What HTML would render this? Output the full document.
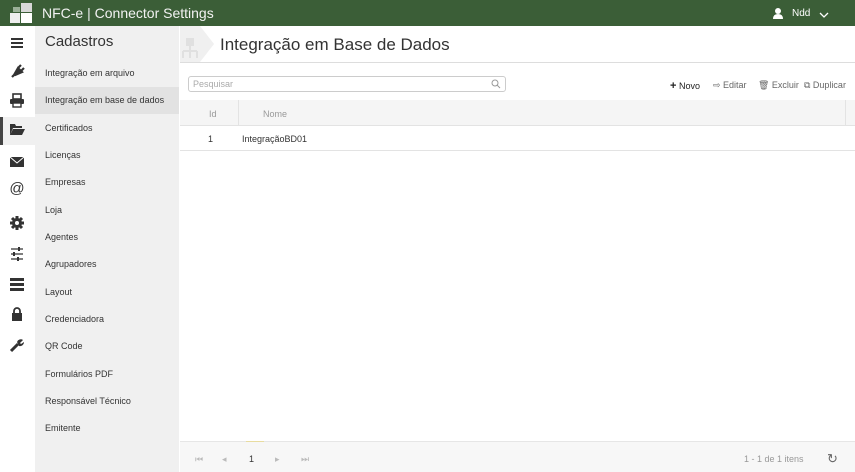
<!DOCTYPE html>
<html><head><meta charset="utf-8"><style>
*{margin:0;padding:0;box-sizing:border-box}
body{width:855px;height:472px;overflow:hidden;font-family:"Liberation Sans",sans-serif;background:#fff;position:relative;color:#333}
.hdr{position:absolute;left:0;top:0;width:855px;height:26px;background:#3b5e37;color:#fff}
.hdr .t{position:absolute;left:42px;top:5px;font-size:14px;color:#f2f2f2}
.hdr .u{position:absolute;left:792px;top:8px;font-size:10px}
.ib{position:absolute;left:0;top:26px;width:35px;height:446px;background:#fff}
.ic{position:absolute;left:9px;width:16px;height:16px}
.act{position:absolute;left:0;top:91px;width:35px;height:28px;background:#f0f0f0;border-left:3px solid #444}
.sm{position:absolute;left:35px;top:26px;width:144px;height:446px;background:#f0f0f0}
.sm h2{font-weight:normal;font-size:15px;color:#333;position:absolute;left:10px;top:7px}
.mi{position:absolute;left:10px;font-size:9px;color:#333}
.hov{position:absolute;left:0;top:61px;width:144px;height:27px;background:#e2e2e2}
.ttl{position:absolute;left:220px;top:35px;font-size:17px;color:#333}
.line{position:absolute;left:180px;top:62px;width:675px;height:1px;background:#ddd}
.srch{position:absolute;left:188px;top:76px;width:318px;height:16px;border:1px solid #ccc;border-radius:3px;font-size:9px;color:#aaa;padding:2px 4px}
.tb{position:absolute;top:80px;font-size:9px;color:#666}
.th{position:absolute;left:180px;top:100px;width:675px;height:26px;background:#f5f5f5;border-bottom:1px solid #e3e3e3;font-size:9px;color:#999}
.row{position:absolute;left:180px;top:126px;width:675px;height:25px;border-bottom:1px solid #e3e3e3;font-size:9px;color:#333}
.ft{position:absolute;left:180px;top:441px;width:675px;height:31px;background:#f7f7f7;border-top:1px solid #e6e6e6;font-size:9px;color:#bbb}
</style></head><body>
<div class="hdr">
<svg style="position:absolute;left:10px;top:3px" width="22" height="20"><rect x="11" y="0" width="11" height="9" fill="#d8d8d8"/><rect x="0" y="10" width="10" height="10" fill="#eee"/><rect x="11" y="10" width="11" height="10" fill="#fff"/><rect x="3" y="4" width="7" height="5" fill="#9ab097"/></svg>
<div class="t">NFC-e | Connector Settings</div>
<svg style="position:absolute;left:773px;top:8px" width="10" height="11"><circle cx="5" cy="3" r="3" fill="#fff"/><path d="M0 11 Q0 6 5 6 Q10 6 10 11Z" fill="#fff"/></svg>
<div class="u">Ndd</div>
<svg style="position:absolute;left:819px;top:12px" width="10" height="6"><path d="M1 1 L5 5 L9 1" stroke="#fff" fill="none" stroke-width="1.3"/></svg>
</div>
<div class="ib">
<div class="act"></div>
<svg class="ic" style="top:9px"><path d="M2 4h12M2 8h12M2 12h12" stroke="#333" stroke-width="2"/></svg>
<svg class="ic" style="top:37px"><path d="M3 14 L6 11 M5 12 L9 5 L13 9 L6 12Z M9 5 L12 2 M12 8 L15 5" stroke="#333" stroke-width="2.2" fill="#333"/></svg>
<svg class="ic" style="top:66px"><rect x="4" y="2" width="8" height="5" fill="none" stroke="#333" stroke-width="1.6"/><rect x="1" y="7" width="14" height="5" rx="1" fill="#333"/><rect x="4" y="11" width="8" height="4" fill="#fff" stroke="#333" stroke-width="1.4"/></svg>
<svg class="ic" style="top:95px"><path d="M1 3h5l1 2h6v2H4L1 14Z M4 8h12l-3 6H1Z" fill="#333"/></svg>
<svg class="ic" style="top:128px"><rect x="1" y="3" width="14" height="10" fill="#333"/><path d="M1 3 L8 9 L15 3" stroke="#fff" fill="none" stroke-width="1"/></svg>
<div class="ic" style="top:155px;font-size:15px;color:#333;text-align:center;line-height:16px">@</div>
<svg class="ic" style="top:189px"><circle cx="8" cy="8" r="5" fill="#333"/><path d="M8 1v14M1 8h14M3 3l10 10M13 3L3 13" stroke="#333" stroke-width="3"/><circle cx="8" cy="8" r="2" fill="#fff"/></svg>
<svg class="ic" style="top:220px"><path d="M2 3h12M2 8h12M2 13h12" stroke="#333" stroke-width="1.3"/><rect x="9" y="1" width="2" height="4" fill="#333"/><rect x="4" y="6" width="2" height="4" fill="#333"/><rect x="8" y="11" width="2" height="4" fill="#333"/></svg>
<svg class="ic" style="top:250px"><rect x="1" y="2" width="14" height="3" fill="#333"/><rect x="1" y="7" width="14" height="3" fill="#333"/><rect x="1" y="12" width="14" height="3" fill="#333"/></svg>
<svg class="ic" style="top:280px"><rect x="3" y="7" width="10" height="8" fill="#333"/><path d="M5 7V5a3 3 0 0 1 6 0v2" stroke="#333" stroke-width="1.8" fill="none"/></svg>
<svg class="ic" style="top:311px"><path d="M2 14 L9 7" stroke="#333" stroke-width="3"/><path d="M8 5 A4 4 0 0 1 14 3 L11 6 L12 7 L15 5 A4 4 0 0 1 10 9Z" fill="#333"/></svg>
</div>
<div class="sm">
<div class="hov"></div>
<h2>Cadastros</h2>
<div class="mi" style="top:42px">Integração em arquivo</div>
<div class="mi" style="top:69px">Integração em base de dados</div>
<div class="mi" style="top:97px">Certificados</div>
<div class="mi" style="top:124px">Licenças</div>
<div class="mi" style="top:151px">Empresas</div>
<div class="mi" style="top:179px">Loja</div>
<div class="mi" style="top:206px">Agentes</div>
<div class="mi" style="top:233px">Agrupadores</div>
<div class="mi" style="top:261px">Layout</div>
<div class="mi" style="top:288px">Credenciadora</div>
<div class="mi" style="top:315px">QR Code</div>
<div class="mi" style="top:343px">Formulários PDF</div>
<div class="mi" style="top:370px">Responsável Técnico</div>
<div class="mi" style="top:397px">Emitente</div>
</div>
<svg style="position:absolute;left:180px;top:26px" width="36" height="36"><path d="M0 0 H20 L34 18 L20 36 H0Z" fill="#f0f0f0"/><rect x="6" y="12" width="8" height="8" fill="#e0e0e0"/><path d="M10 20v5M3 25h14M3 25v7M10 25v7M17 25v7" stroke="#e0e0e0" stroke-width="2"/></svg>
<div class="ttl">Integração em Base de Dados</div>
<div class="line"></div>
<div class="srch">Pesquisar</div>
<svg style="position:absolute;left:491px;top:79px" width="10" height="10"><circle cx="4" cy="4" r="3" stroke="#999" fill="none"/><path d="M6 6l3 3" stroke="#999"/></svg>
<div class="tb" style="left:670px;color:#222"><b style="font-size:11px">+</b> Novo</div>
<div class="tb" style="left:713px">⇨ Editar</div>
<div class="tb" style="left:758px">🗑 Excluir</div>
<div class="tb" style="left:804px">⧉ Duplicar</div>
<div class="th"><span style="position:absolute;left:29px;top:9px">Id</span><div style="position:absolute;left:58px;top:0;width:1px;height:26px;background:#e3e3e3"></div><span style="position:absolute;left:83px;top:9px">Nome</span><div style="position:absolute;left:665px;top:0;width:1px;height:26px;background:#e3e3e3"></div></div>
<div class="row"><span style="position:absolute;left:28px;top:8px">1</span><span style="position:absolute;left:62px;top:8px">IntegraçãoBD01</span></div>
<div class="ft"><div style="position:absolute;left:66px;top:-1px;width:18px;height:1px;background:#e8dca0"></div>
<span style="position:absolute;left:15px;top:12px">⏮</span><span style="position:absolute;left:42px;top:12px">◂</span><span style="position:absolute;left:69px;top:12px;color:#333">1</span><span style="position:absolute;left:95px;top:12px">▸</span><span style="position:absolute;left:121px;top:12px">⏭</span>
<span style="position:absolute;left:564px;top:12px;color:#999">1 - 1 de 1 itens</span><span style="position:absolute;left:647px;top:9px;font-size:13px;color:#666">↻</span></div>
</body></html>
